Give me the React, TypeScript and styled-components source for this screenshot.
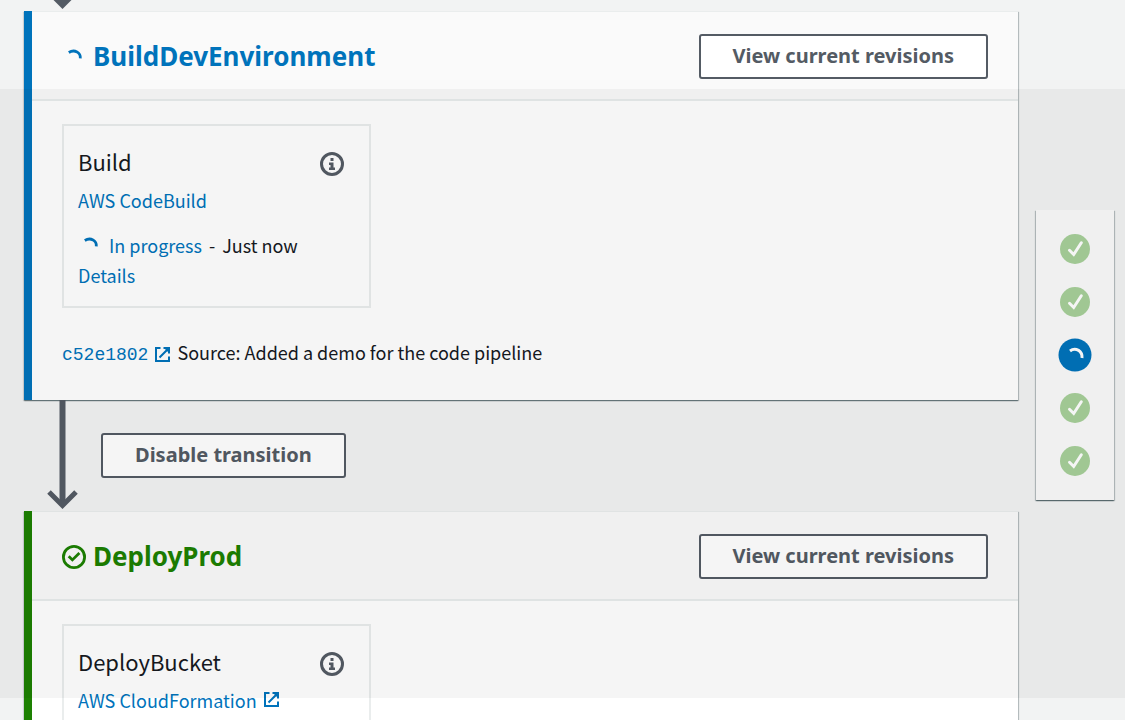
import React from "react";
import styled, { createGlobalStyle } from "styled-components";

const textFont = `"Noto Sans CJK SC", "Noto Sans", sans-serif`;
const displayFont = `"Noto Sans", sans-serif`;
const ink = "#16191f";
const slate = "#545b64";
const blue = "#0073bb";
const green = "#1d8102";

const GlobalStyle = createGlobalStyle`
  * { box-sizing: border-box; }
  body { margin: 0; background: #f2f3f3; color: ${ink}; font: 18px/30px ${textFont}; }
`;

const Page = styled.div`
  position: relative;
  display: flex;
  align-items: flex-start;
  gap: 18px;
  height: 100vh;
  padding: 0 11px 0 24px;
  overflow: hidden;
`;

const Dim = styled.div`
  position: absolute;
  inset: 89px 0 22px;
  background: rgba(0, 0, 0, 0.04);
  pointer-events: none;
`;

const Pipeline = styled.main`
  flex: 1;
  min-width: 0;
`;

const StageBox = styled.section<{ $accent: string }>`
  border-left: 8px solid ${(p) => p.$accent};
  background: #fff;
  box-shadow: 0 1px 1px rgba(0, 28, 36, 0.4), 1px 1px 1px rgba(0, 28, 36, 0.2), -1px 1px 1px rgba(0, 28, 36, 0.1);
`;

const StageHeader = styled.header`
  display: flex;
  align-items: center;
  justify-content: space-between;
  padding: 22px 30px 20px;
  border-top: 1px solid #eaeded;
  border-bottom: 2px solid #e9eded;
  background: #fafafa;
`;

const StageTitle = styled.h2<{ $color: string }>`
  display: flex;
  align-items: center;
  gap: 7px;
  margin: 0;
  color: ${(p) => p.$color};
  font: 700 26px/32px ${displayFont};
`;

const TitleText = styled.span`
  padding-bottom: 2px;
`;

const Button = styled.button`
  height: 45px;
  padding: 0 32px 2px;
  border: 2px solid ${slate};
  border-radius: 3px;
  background: #fff;
  color: ${slate};
  font: 700 20px/30px ${displayFont};
  cursor: pointer;
`;

const StageBody = styled.div`
  padding: 23px 30px 33px;
`;

const Card = styled.article`
  width: 309px;
  padding: 20px 14px 16px;
  border: 2px solid #eaeded;
`;

const CardHead = styled.div`
  display: flex;
  align-items: flex-start;
  justify-content: space-between;
  padding-right: 11px;
`;

const CardTitle = styled.h3`
  margin: 0;
  font-size: 22px;
  line-height: 30px;
  font-weight: 400;
`;

const IconButton = styled.button`
  display: flex;
  align-items: center;
  height: 36px;
  padding: 0;
  border: 0;
  background: none;
  color: ${slate};
  cursor: pointer;
`;

const Line = styled.div<{ $top?: number; $align?: string }>`
  display: flex;
  align-items: ${(p) => p.$align ?? "center"};
  gap: 7px;
  height: 30px;
  margin-top: ${(p) => p.$top ?? 0}px;
`;

const Link = styled.a`
  display: inline-flex;
  align-items: center;
  gap: 7px;
  color: ${blue};
  text-decoration: none;
`;

const Hash = styled(Link)`
  font-family: "Liberation Mono", monospace;
`;

const ExternalSvg = styled.svg`
  margin-bottom: 2px;
`;

const Transition = styled.div`
  display: flex;
  align-items: flex-start;
  gap: 23px;
  height: 111px;
  padding-left: 23px;
`;

const TransitionButton = styled(Button)`
  margin-top: 33px;
`;

const FirstTransition = styled.div`
  display: flex;
  align-items: flex-end;
  height: 11px;
  padding-left: 23px;
`;

const Progress = styled.nav`
  display: flex;
  flex: none;
  flex-direction: column;
  align-items: center;
  gap: 23px;
  width: 78px;
  margin-top: 210px;
  padding: 24px 0;
  background: #fafafa;
  box-shadow: 0 1px 1px rgba(0, 28, 36, 0.4), 1px 1px 1px rgba(0, 28, 36, 0.2), -1px 1px 1px rgba(0, 28, 36, 0.2);
`;

const Step = styled.a`
  display: block;
  width: 30px;
  height: 30px;
  svg { display: block; overflow: visible; }
`;

const Spinner = () => (
  <svg width="24" height="24" viewBox="0 0 24 24" fill="none" stroke={blue} strokeWidth="2.8">
    <path d="M6.800 7.500Q11 4.900 15 6.900Q18.700 9 18.300 13.300" />
  </svg>
);

const CheckCircle = () => (
  <svg width="24" height="24" viewBox="0 0 24 24" fill="none" stroke={green} strokeWidth="2.8">
    <circle cx="12" cy="12" r="10.600" />
    <path d="M6.700 11.200l3.700 3.700 7-6.800" />
  </svg>
);

const Info = () => (
  <svg width="24" height="24" viewBox="0 0 24 24">
    <circle cx="12" cy="12" r="10.500" fill="none" stroke="currentColor" strokeWidth="3" />
    <path fill="currentColor" d="M10.500 6h3v3h-3zM9 10.500h4.500v5H15V18H9v-2.500h1.500V13H9z" />
  </svg>
);

const External = () => (
  <ExternalSvg width="15" height="15" viewBox="0 0 15 15" fill="none" stroke="currentColor" strokeWidth="2">
    <path d="M5.500 1H1v13h13V9.500M8.500 1H14v5.500M14 1L4.500 10.500" />
    <path d="M9 1h5v5z" fill="currentColor" stroke="none" />
  </ExternalSvg>
);

const Arrow = () => (
  <svg width="31" height="110" viewBox="0 0 31 110" fill="none" stroke={slate}>
    <path d="M15.500 0v104" strokeWidth="6" />
    <path d="M2 92l13.500 13.500 13.500-13.500" strokeWidth="5" />
  </svg>
);

const ArrowTip = () => (
  <svg width="31" height="11" viewBox="0 0 31 11">
    <path d="M6.500 0h18l-9 9z" fill={slate} />
  </svg>
);

const StepDone = () => (
  <svg width="30" height="30" viewBox="0 0 30 30" fill="none">
    <circle cx="15" cy="15" r="15" fill="#a7d09a" />
    <path d="M9.500 16.300l4.200 4.200L21.300 8.800" stroke="#fff" strokeWidth="3" strokeLinecap="round" />
  </svg>
);

const StepRunning = () => (
  <svg width="30" height="30" viewBox="0 0 30 30" fill="none">
    <circle cx="15" cy="15" r="16.500" fill={blue} />
    <path d="M10 11Q14 8 18.500 10.300Q22.500 13 22 18" stroke="#fff" strokeWidth="3" />
  </svg>
);

const steps = [
  { name: "Source", running: false },
  { name: "Test", running: false },
  { name: "BuildDevEnvironment", running: true },
  { name: "DeployProd", running: false },
  { name: "DeployBucket", running: false },
];

export default function App() {
  return (
    <>
      <GlobalStyle />
      <Page>
        <Pipeline>
          <FirstTransition><ArrowTip /></FirstTransition>
          <StageBox $accent={blue}>
            <StageHeader>
              <StageTitle $color={blue}><Spinner /><TitleText>BuildDevEnvironment</TitleText></StageTitle>
              <Button>View current revisions</Button>
            </StageHeader>
            <StageBody>
              <Card>
                <CardHead>
                  <CardTitle>Build</CardTitle>
                  <IconButton aria-label="Build information"><Info /></IconButton>
                </CardHead>
                <Line $top={3}><Link href="#codebuild">AWS CodeBuild</Link></Line>
                <Line $top={15}>
                  <Spinner />
                  <Link href="#progress">In progress</Link>
                  <span>-</span>
                  <span>Just now</span>
                </Line>
                <Line><Link href="#details">Details</Link></Line>
              </Card>
              <Line $top={29} $align="baseline">
                <Hash href="#commit">c52e1802<External /></Hash>
                <span>Source: Added a demo for the code pipeline</span>
              </Line>
            </StageBody>
          </StageBox>
          <Transition>
            <Arrow />
            <TransitionButton>Disable transition</TransitionButton>
          </Transition>
          <StageBox $accent={green}>
            <StageHeader>
              <StageTitle $color={green}><CheckCircle /><TitleText>DeployProd</TitleText></StageTitle>
              <Button>View current revisions</Button>
            </StageHeader>
            <StageBody>
              <Card>
                <CardHead>
                  <CardTitle>DeployBucket</CardTitle>
                  <IconButton aria-label="DeployBucket information"><Info /></IconButton>
                </CardHead>
                <Line $top={3}><Link href="#cloudformation">AWS CloudFormation<External /></Link></Line>
              </Card>
            </StageBody>
          </StageBox>
        </Pipeline>
        <Progress aria-label="Stages">
          {steps.map((s) => (
            <Step key={s.name} href={`#${s.name}`} aria-label={s.name}>
              {s.running ? <StepRunning /> : <StepDone />}
            </Step>
          ))}
        </Progress>
        <Dim />
      </Page>
    </>
  );
}
